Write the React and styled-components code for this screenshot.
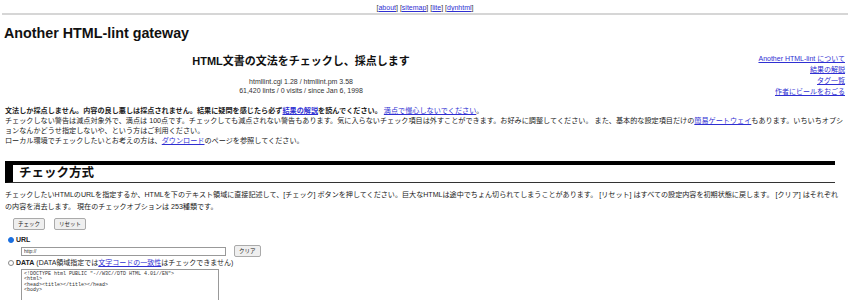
import React from "react";
import styled, { createGlobalStyle } from "styled-components";

const GlobalStyle = createGlobalStyle`
  html, body {
    margin: 0;
    padding: 0;
    background: #fff;
  }
  body {
    font-family: "Liberation Sans", "Noto Sans CJK JP", Arial, sans-serif;
    color: #222;
  }
`;

const DOCTYPE_SAMPLE = `<!DOCTYPE html PUBLIC "-//W3C//DTD HTML 4.01//EN">
<html>
<head><title></title></head>
<body>
`;

const NAV_ITEMS = ["about", "sitemap", "lite", "dynhtml"];
const SIDE_LINKS = ["Another HTML-lint について", "結果の解説", "タグ一覧", "作者にビールをおごる"];

function App() {
    return (
        <Page>
            <GlobalStyle />
            <NavBar>
                {NAV_ITEMS.map((item, i) => (
                    <span key={item}>
                        [<Link href="#">{item}</Link>]{i < NAV_ITEMS.length - 1 ? " " : ""}
                    </span>
                ))}
            </NavBar>
            <Rule />

            <Title>Another HTML-lint gateway</Title>

            <HeaderRow>
                <div>
                    <Lead>HTML文書の文法をチェックし、採点します</Lead>
                    <Version>
                        htmllint.cgi 1.28 / htmllint.pm 3.58<br />
                        61,420 lints / 0 visits / since Jan 6, 1998
                    </Version>
                </div>
                <SideLinks>
                    {SIDE_LINKS.map((label) => (
                        <Link key={label} href="#">{label}</Link>
                    ))}
                </SideLinks>
            </HeaderRow>

            <Intro>
                <b>文法しか採点しません。内容の良し悪しは採点されません。結果に疑問を感じたら必ず<Link href="#">結果の解説</Link>を読んでください。</b>
                {" "}<Link href="#">満点で慢心しないでください</Link>。<br />
                チェックしない警告は減点対象外で、満点は 100点です。チェックしても減点されない警告もあります。気に入らないチェック項目は外すことができます。お好みに調整してください。 また、基本的な設定項目だけの<Link href="#">簡易ゲートウェイ</Link>もあります。いちいちオプションなんかどうせ指定しないや、という方はご利用ください。<br />
                ローカル環境でチェックしたいとお考えの方は、<Link href="#">ダウンロード</Link>のページを参照してください。
            </Intro>

            <SectionHeading>チェック方式</SectionHeading>

            <Desc>
                チェックしたいHTMLのURLを指定するか、HTMLを下のテキスト領域に直接記述して、[チェック] ボタンを押してください。巨大なHTMLは途中でちょん切られてしまうことがあります。 [リセット] はすべての設定内容を初期状態に戻します。 [クリア] はそれぞれの内容を消去します。 現在のチェックオプションは 253種類です。
            </Desc>

            <ButtonRow>
                <SmallButton>チェック</SmallButton>
                <SmallButton>リセット</SmallButton>
            </ButtonRow>

            <ModeRow>
                <Radio checked />
                <b>URL</b>
            </ModeRow>
            <InputRow>
                <UrlInput defaultValue="http://" />
                <SmallButton>クリア</SmallButton>
            </InputRow>

            <ModeRow $tight>
                <Radio />
                <span>
                    <b>DATA</b> (DATA領域指定では<Link href="#">文字コードの一致性</Link>はチェックできません)
                </span>
            </ModeRow>
            <DataArea defaultValue={DOCTYPE_SAMPLE} />
        </Page>
    );
}

const Page = styled.div`
    padding: 0 5px;
    overflow: hidden;
`

const Link = styled.a`
    color: #2f2fd2;
    text-decoration: underline;
`

// 上部ナビ
const NavBar = styled.div`
    padding-top: 3px;
    text-align: center;
    font-size: 7px;
    line-height: 9px;
    color: #333;
`

const Rule = styled.div`
    height: 2px;
    margin: 1px -3px 0;
    background: #d6d6d6;
`

const Title = styled.h1`
    margin: 10px 0 0 -1px;
    font-size: 14.3px;
    line-height: 16px;
    font-weight: bold;
    color: #111;
`

const HeaderRow = styled.div`
    display: grid;
    grid-template-columns: 592px 1fr;
    margin-top: 12px;
`

const Lead = styled.h2`
    margin: 2px 0 0;
    text-align: center;
    font-size: 11px;
    line-height: 13px;
    font-weight: bold;
    color: #111;
`

const Version = styled.div`
    margin-top: 9px;
    text-align: center;
    font-size: 7px;
    line-height: 9px;
    color: #333;
`

const SideLinks = styled.div`
    display: flex;
    flex-direction: column;
    align-items: flex-end;
    font-size: 7px;
    line-height: 11px;
`

const Intro = styled.p`
    margin: 9px 0 0;
    font-size: 7.14px;
    line-height: 10px;
`

// 見出し
const SectionHeading = styled.h2`
    margin: 15px 10px 0 0;
    padding-left: 6px;
    border-top: 4px solid #000;
    border-left: 8px solid #000;
    border-bottom: 1px solid #333;
    font-size: 12.5px;
    line-height: 17px;
    font-weight: bold;
    color: #111;
`

const Desc = styled.p`
    margin: 6px 0 0;
    font-size: 7.08px;
    line-height: 12px;
`

const ButtonRow = styled.div`
    display: flex;
    gap: 9px;
    margin: 5px 0 0 8px;
`

const SmallButton = styled.button`
    height: 12px;
    padding: 0 4px;
    border: 1px solid #aaa;
    border-radius: 2px;
    background: #efefef;
    font-family: inherit;
    font-size: 5.5px;
    line-height: 10px;
    color: #222;
`

const ModeRow = styled.div`
    display: flex;
    align-items: center;
    gap: 2px;
    margin: ${(props) => (props.$tight ? "1px" : "5px")} 0 0 3px;
    font-size: 7px;
    line-height: 10px;
`

const Radio = styled.span`
    flex: none;
    width: 4px;
    height: 4px;
    border-radius: 50%;
    border: 1px solid ${(props) => (props.checked ? "#1a6fe0" : "#888")};
    background: ${(props) => (props.checked ? "#1a6fe0" : "#fff")};
`

const InputRow = styled.div`
    display: flex;
    align-items: center;
    gap: 8px;
    margin-left: 16px;
`

const UrlInput = styled.input`
    box-sizing: border-box;
    width: 205px;
    height: 9px;
    padding: 0 2px;
    border: 1px solid #999;
    font-family: "Liberation Sans", sans-serif;
    font-size: 5px;
    color: #333;
`

const DataArea = styled.textarea`
    display: block;
    box-sizing: border-box;
    width: 198px;
    height: 60px;
    margin: 1px 0 0 16px;
    padding: 2px;
    border: 1px solid #999;
    resize: none;
    font-family: "Liberation Mono", monospace;
    font-size: 5px;
    line-height: 5.3px;
    color: #333;
`

export default App;
